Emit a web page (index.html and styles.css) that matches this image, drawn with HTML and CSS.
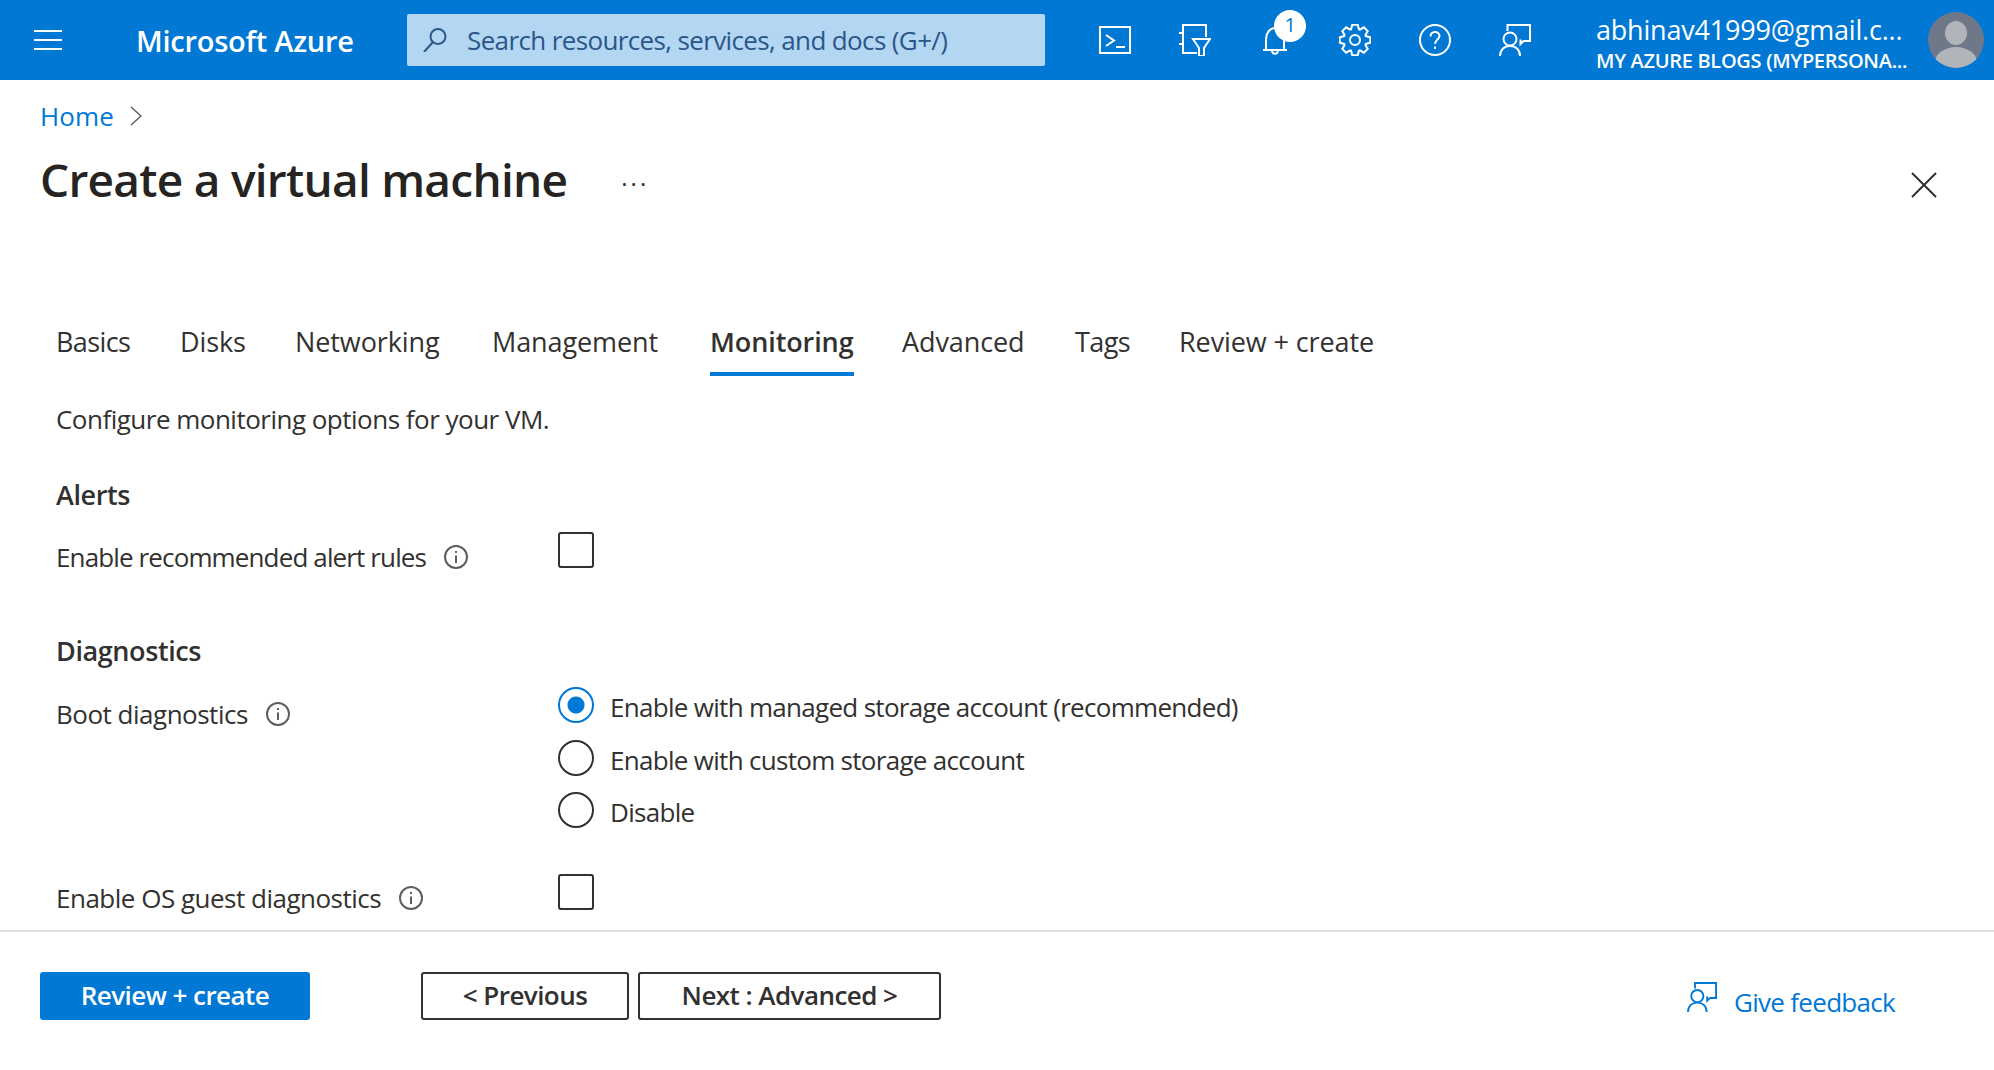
FILE: index.html
```html
<!DOCTYPE html>
<html>
<head>
    <meta charset="utf-8">
    <title>Create a virtual machine - Microsoft Azure</title>
    <link rel="stylesheet" href="styles.css">
</head>
<body>
    <svg class="defs" width="0" height="0">
        <symbol id="feedback" viewBox="0 0 32 32">
            <circle cx="11" cy="15" r="6.5"/>
            <path d="M1 32c0-6 4-10 10-10s10 4 10 10"/>
            <path d="M8.5 7V1H31V17H24.5L21.5 20V15.5"/>
        </symbol>
        <symbol id="info" viewBox="0 0 24 24">
            <circle cx="12" cy="12" r="11"/>
            <path d="M12 10.5V18M12 6V8"/>
        </symbol>
    </svg>

    <!-- top bar -->
    <header class="topbar">
        <div class="burger"><span></span><span></span><span></span></div>
        <div class="brand">Microsoft Azure</div>
        <div class="search">
            <svg class="search-icon" viewBox="0 0 24 24"><circle cx="15" cy="8.500" r="7.500"/><path d="M10 14L1 24"/></svg>
            <span class="search-text">Search resources, services, and docs (G+/)</span>
        </div>
        <div class="tools">
            <div class="tool">
                <svg class="icon" width="32" height="28" viewBox="0 0 32 28"><rect x="1" y="1" width="30" height="26"/><path d="M7 9L15 14.500L7 20M17 21H26"/></svg>
            </div>
            <div class="tool">
                <svg class="icon" width="32" height="32" viewBox="0 0 32 32"><path d="M18 29H4V1H27V13M0 9H4M0 20H4"/><path d="M14 15H31L25 24V32H20V24Z"/></svg>
            </div>
            <div class="tool tool-bell">
                <svg class="icon" width="24" height="30" viewBox="0 0 24 30"><path d="M0 25H24M3 25V14C3 8 7 3 12 3S21 8 21 14V25M9 25C9 30 15 30 15 25"/></svg>
                <span class="badge">1</span>
            </div>
            <div class="tool">
                <svg class="icon" width="32" height="32" viewBox="0 0 32 32"><path d="M12.07 5.190L13.310 .74H18.690L19.930 5.190L20.870 5.580L24.890 3.310L28.690 7.110L26.420 11.130L26.810 12.070L31.260 13.310V18.690L26.810 19.930L26.420 20.870L28.690 24.890L24.890 28.690L20.870 26.420L19.930 26.810L18.690 31.260H13.310L12.070 26.810L11.130 26.420L7.110 28.690L3.310 24.890L5.580 20.870L5.190 19.930L.74 18.690V13.310L5.190 12.070L5.580 11.130L3.310 7.110L7.110 3.310L11.130 5.580Z"/><circle cx="16" cy="16" r="5"/></svg>
            </div>
            <div class="tool">
                <svg class="icon" width="32" height="32" viewBox="0 0 32 32"><circle cx="16" cy="16" r="15"/><path d="M11.500 12.500C11.500 6.500 20.500 6.500 20.500 12C20.500 15.500 16 15.500 16 20M16 22.500V25"/></svg>
            </div>
            <div class="tool">
                <svg class="icon" width="32" height="32"><use href="#feedback"/></svg>
            </div>
        </div>
        <div class="account">
            <div class="account-mail">abhinav41999@gmail.c...</div>
            <div class="account-dir">MY AZURE BLOGS (MYPERSONA...</div>
        </div>
        <svg class="avatar" viewBox="0 0 56 56">
            <defs><clipPath id="disc"><circle cx="28" cy="28" r="28"/></clipPath></defs>
            <g clip-path="url(#disc)">
                <rect width="56" height="56" fill="#6e7888"/>
                <ellipse cx="28" cy="21" rx="11" ry="12" fill="#b1b5ba"/>
                <ellipse cx="28" cy="50" rx="21" ry="15" fill="#b1b5ba"/>
            </g>
        </svg>
    </header>

    <main class="main">
        <nav class="crumbs">
            <a class="crumb-link">Home</a>
            <svg class="crumb-sep" viewBox="0 0 12 20"><path d="M1 1L11 10L1 19"/></svg>
        </nav>

        <div class="titlebar">
            <h1 class="title">Create a virtual machine</h1>
            <span class="more">&middot;&middot;&middot;</span>
            <svg class="close" viewBox="0 0 26 26"><path d="M1 1L25 25M25 1L1 25"/></svg>
        </div>

        <div class="tabs">
            <div class="tab tab-short"><span>Basics</span></div>
            <div class="tab"><span>Disks</span></div>
            <div class="tab"><span>Networking</span></div>
            <div class="tab"><span>Management</span></div>
            <div class="tab active"><span>Monitoring</span></div>
            <div class="tab"><span>Advanced</span></div>
            <div class="tab tab-short"><span>Tags</span></div>
            <div class="tab"><span>Review + create</span></div>
        </div>

        <p class="intro">Configure monitoring options for your VM.</p>

        <h2 class="section section-alerts">Alerts</h2>
        <div class="row row-alert">
            <div class="label label-tight">Enable recommended alert rules <svg class="info"><use href="#info"/></svg></div>
            <div class="check"></div>
        </div>

        <h2 class="section section-diag">Diagnostics</h2>
        <div class="row row-boot">
            <div class="label">Boot diagnostics <svg class="info"><use href="#info"/></svg></div>
            <div class="radios">
                <div class="radio-item"><span class="radio on"></span><span class="radio-text">Enable with managed storage account (recommended)</span></div>
                <div class="radio-item"><span class="radio"></span><span class="radio-text">Enable with custom storage account</span></div>
                <div class="radio-item"><span class="radio"></span><span class="radio-text">Disable</span></div>
            </div>
        </div>
        <div class="row row-guest">
            <div class="label">Enable OS guest diagnostics <svg class="info"><use href="#info"/></svg></div>
            <div class="check"></div>
        </div>
    </main>

    <footer class="footer">
        <button class="btn btn-primary">Review + create</button>
        <button class="btn btn-prev">&lt; Previous</button>
        <button class="btn btn-next">Next : Advanced &gt;</button>
        <a class="give">
            <svg class="give-icon"><use href="#feedback"/></svg>
            Give feedback
        </a>
    </footer>
</body>
</html>
```
FILE: styles.css
```css
html, body {
    margin: 0;
    height: 100%;
    overflow: hidden;
    background: #fff;
}
body {
    font-family: "Open Sans", "Noto Sans", sans-serif;
    color: #323130;
    font-size: 26px;
    letter-spacing: -0.5px;
}
.defs {
    display: block;
    height: 0;
}
symbol {
    overflow: visible;
}
symbol * {
    fill: none;
    stroke: currentColor;
    stroke-width: 2;
}

/* top bar */
.topbar {
    height: 80px;
    background: #0078d4;
    color: #fff;
    display: flex;
    align-items: center;
}
.burger {
    width: 28px;
    margin-left: 34px;
    display: flex;
    flex-direction: column;
    gap: 7px;
}
.burger span {
    height: 2px;
    background: #fff;
}
.brand {
    margin-left: 74px;
    width: 271px;
    font-size: 29px;
    font-weight: 600;
    letter-spacing: -0.25px;
}
.search {
    width: 638px;
    height: 52px;
    background: #b3d6f2;
    border-radius: 2px;
    display: flex;
    align-items: center;
    color: #2a5788;
}
.search-icon {
    width: 24px;
    height: 24px;
    margin-left: 16px;
    fill: none;
    stroke: #2a5788;
    stroke-width: 2;
}
.search-text {
    margin-left: 20px;
    font-size: 26px;
    letter-spacing: -0.63px;
}
.tools {
    display: flex;
    margin-left: 30px;
}
.tool {
    width: 80px;
    height: 80px;
    display: flex;
    align-items: center;
    justify-content: center;
    position: relative;
}
.icon {
    fill: none;
    stroke: #fff;
    stroke-width: 2;
}
.badge {
    position: absolute;
    left: 39px;
    top: 10px;
    width: 32px;
    height: 32px;
    border-radius: 50%;
    background: #fff;
    color: #0078d4;
    font-size: 20px;
    line-height: 30px;
    text-align: center;
}
.account {
    margin-left: 41px;
    width: 332px;
    white-space: nowrap;
    padding-top: 5px;
}
.account-mail {
    font-size: 27px;
    line-height: 36px;
    letter-spacing: -0.2px;
}
.account-dir {
    font-size: 20px;
    line-height: 25px;
    font-weight: 600;
    letter-spacing: -0.3px;
}
.avatar {
    width: 56px;
    height: 56px;
    flex: none;
}

/* page head */
.main {
    height: 850px;
    overflow: hidden;
}
.crumbs {
    margin: 18px 0 0 40px;
    height: 36px;
    display: flex;
    align-items: center;
}
.crumb-link {
    color: #0078d4;
    font-size: 26px;
    line-height: 36px;
    letter-spacing: 0.15px;
}
.crumb-sep {
    width: 12px;
    height: 20px;
    margin-left: 16px;
    fill: none;
    stroke: #605e5c;
    stroke-width: 1.5;
}
.titlebar {
    margin: 15px 57px 0 40px;
    height: 60px;
    display: flex;
    align-items: center;
}
.title {
    margin: 0;
    font-size: 46px;
    font-weight: 600;
    line-height: 60px;
    color: #252423;
    letter-spacing: -0.73px;
}
.more {
    margin-left: 54px;
    font-size: 24px;
    line-height: 40px;
    margin-top: 10px;
    letter-spacing: 3px;
}
.close {
    width: 26px;
    height: 26px;
    margin-left: auto;
    margin-top: 12px;
    fill: none;
    stroke: #323130;
    stroke-width: 2;
}

/* tabs */
.tabs {
    margin: 111px 0 0 56px;
    display: grid;
    grid-template-columns: 124px 115px 197px 218px 192px 173px 104px auto;
}
.tab {
    font-size: 27px;
    line-height: 44px;
    white-space: nowrap;
    letter-spacing: -0.1px;
}
.tab-short {
    letter-spacing: -0.6px;
}
.tab span {
    display: inline-block;
    height: 52px;
}
.tab.active span {
    font-weight: 600;
    border-bottom: 4px solid #0078d4;
}

/* form */
.intro {
    margin: 25px 0 0 56px;
    line-height: 36px;
    letter-spacing: -0.51px;
}
.section {
    margin: 0 0 0 56px;
    font-size: 27px;
    font-weight: 600;
    line-height: 36px;
    letter-spacing: -0.4px;
}
.section-alerts {
    margin-top: 40px;
}
.section-diag {
    margin-top: 57px;
}
.row {
    margin-left: 56px;
    display: grid;
    grid-template-columns: 502px auto;
    align-items: start;
}
.row-alert {
    margin-top: 19px;
    height: 44px;
}
.row-alert .label {
    padding-top: 7px;
}
.row-boot {
    margin-top: 18px;
}
.row-boot .label {
    padding-top: 9px;
}
.row-guest {
    margin-top: 46px;
}
.row-guest .label {
    padding-top: 6px;
}
.label {
    line-height: 36px;
    display: flex;
    align-items: center;
}
.label-tight {
    letter-spacing: -0.87px;
}
.info {
    width: 24px;
    height: 24px;
    margin-left: 18px;
    color: #605e5c;
    flex: none;
}
.check {
    width: 36px;
    height: 36px;
    box-sizing: border-box;
    border: 2px solid #323130;
    border-radius: 3px;
}
.radios {
    display: flex;
    flex-direction: column;
    gap: 16.5px;
}
.radio-item {
    display: flex;
    height: 36px;
}
.radio {
    width: 36px;
    height: 36px;
    box-sizing: border-box;
    border: 2px solid #323130;
    border-radius: 50%;
    flex: none;
}
.radio.on {
    border-color: #0078d4;
    background: radial-gradient(circle, #0078d4 0 8px, #fff 9px);
}
.radio-text {
    margin-left: 16px;
    line-height: 36px;
    padding-top: 2px;
    white-space: nowrap;
    letter-spacing: -0.7px;
}

/* bottom bar */
.footer {
    border-top: 2px solid #e1dfdd;
    padding: 40px 0 0 40px;
    display: flex;
    align-items: flex-start;
}
.btn {
    height: 48px;
    box-sizing: border-box;
    font: inherit;
    font-weight: 600;
    letter-spacing: -0.55px;
    border-radius: 3px;
    padding: 0 0 3px;
    background: #fff;
    border: 2px solid #323130;
    color: #323130;
}
.btn-primary {
    width: 270px;
    background: #0078d4;
    border-color: #0078d4;
    color: #fff;
}
.btn-prev {
    width: 208px;
    margin-left: 111px;
}
.btn-next {
    width: 303px;
    margin-left: 9px;
}
.give {
    margin-left: 746px;
    margin-top: 12px;
    color: #0078d4;
    display: flex;
    align-items: center;
    white-space: nowrap;
    letter-spacing: -0.7px;
}
.give-icon {
    width: 30px;
    height: 30px;
    margin-right: 17px;
    margin-top: -10px;
}
```
